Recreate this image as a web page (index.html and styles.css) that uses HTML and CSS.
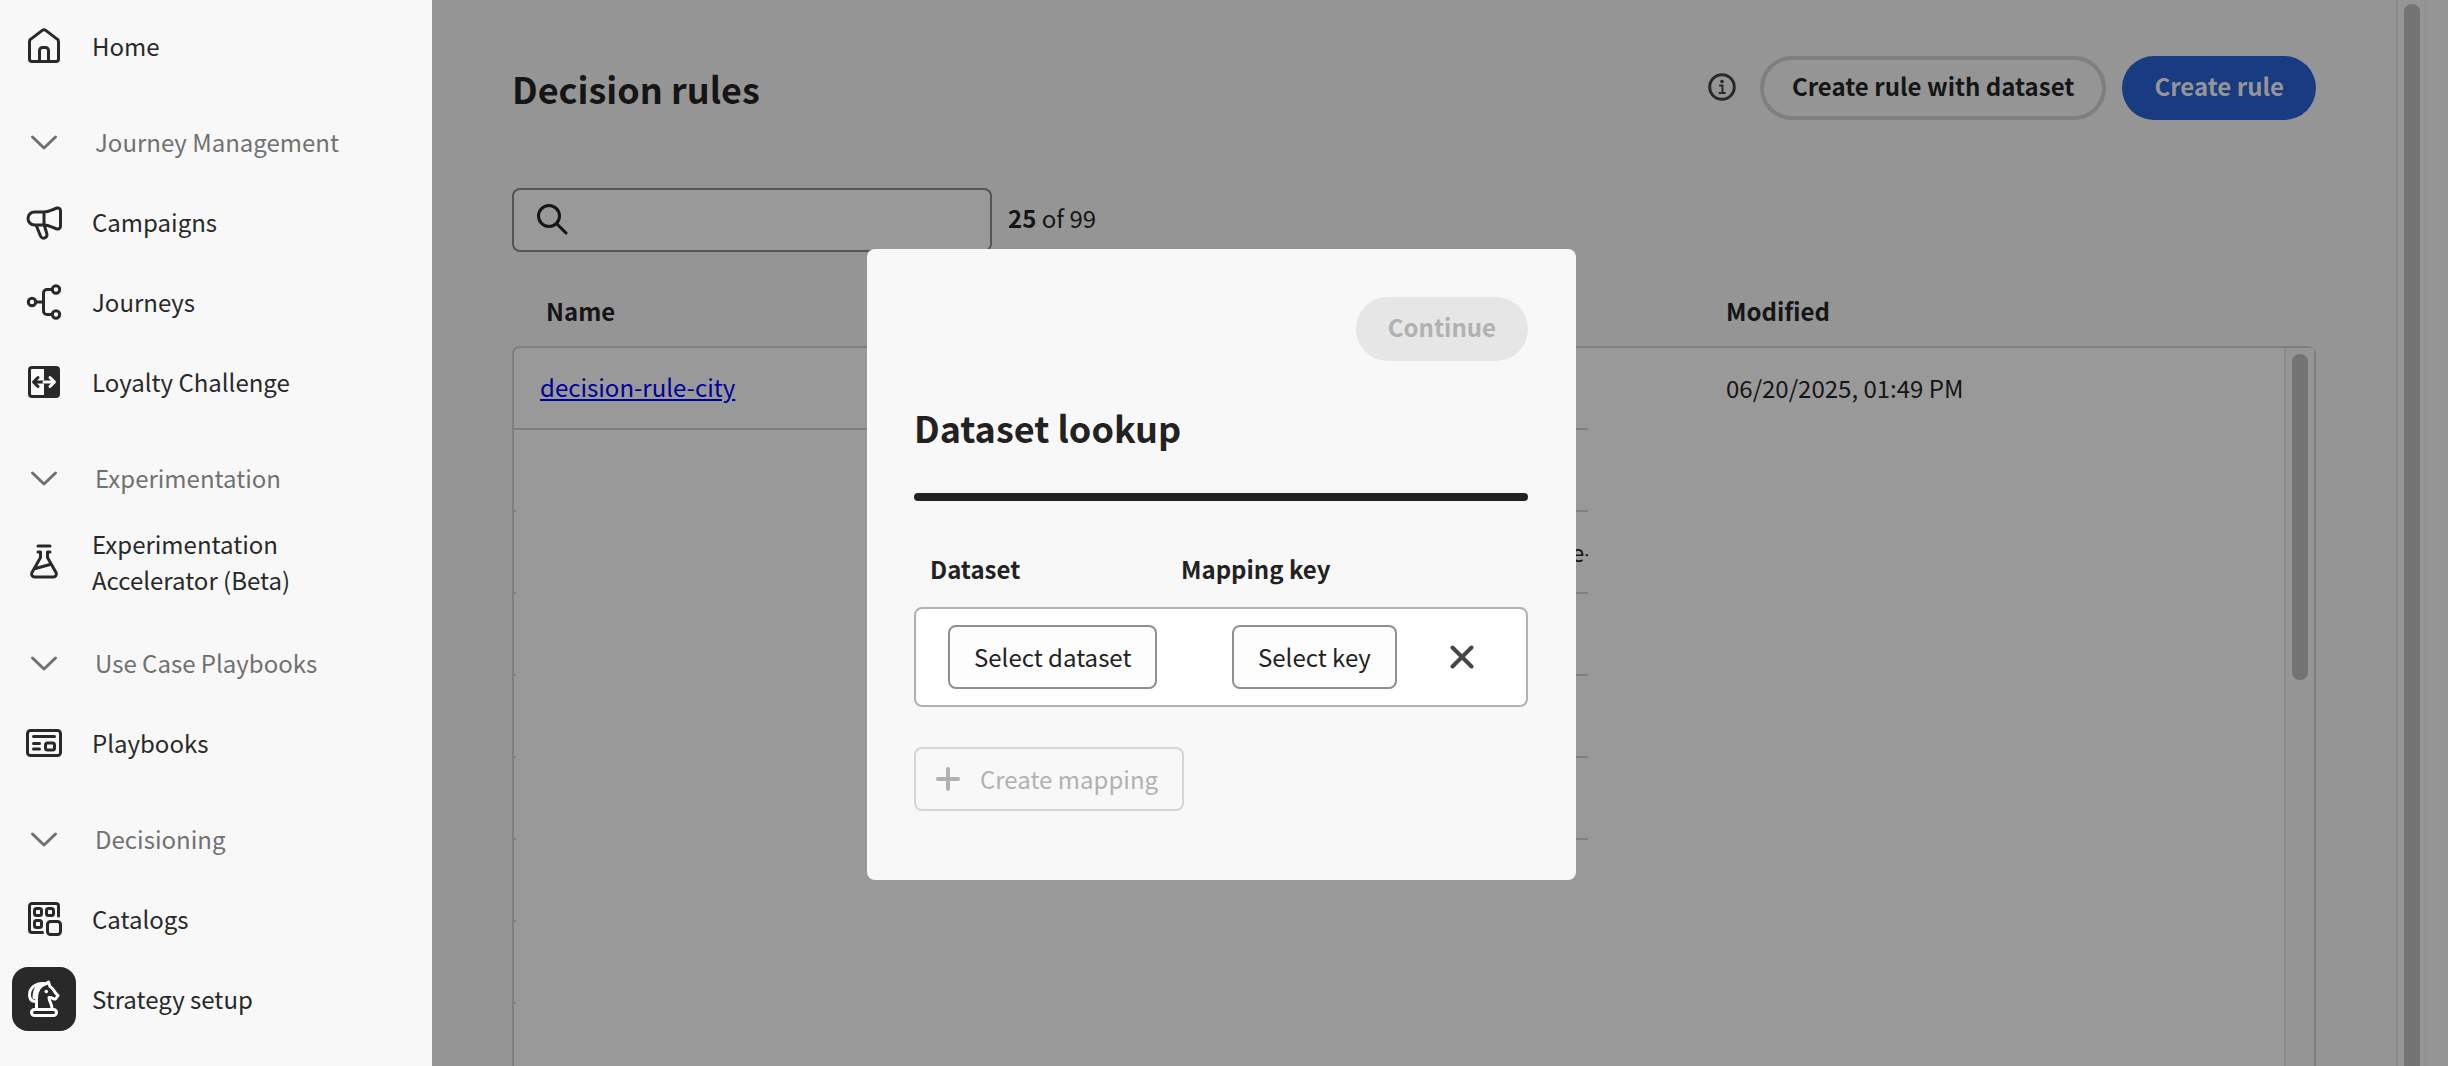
FILE: index.html
```html
<!DOCTYPE html>
<html lang="en">
<head>
<meta charset="utf-8">
<title>Decision rules</title>
<link rel="stylesheet" href="styles.css">
</head>
<body>
<div class="app">
  <nav class="sidebar" aria-label="Main">
    <a class="nav-item" href="#">
      <span class="nav-icon"><svg viewBox="0 0 40 40"><path d="M5.500 15.500a3 3 0 0 1 1.300-2.400L18.300 4.400a2.800 2.800 0 0 1 3.400 0l11.500 8.700a3 3 0 0 1 1.300 2.400V33a2.500 2.500 0 0 1-2.500 2.500H8A2.500 2.500 0 0 1 5.500 33zM15.500 35V24.500a3 3 0 0 1 3-3h3a3 3 0 0 1 3 3V35"/></svg></span>
      <span class="nav-label">Home</span>
    </a>
    <button class="nav-group" type="button"><span class="nav-icon"><svg viewBox="0 0 40 40"><path d="M8.500 15 20 26l11.500-11"/></svg></span><span class="nav-label">Journey Management</span></button>
    <a class="nav-item" href="#">
      <span class="nav-icon"><svg viewBox="0 0 40 40"><path d="M20 10h-9.500a6.500 6.500 0 0 0 0 13H20zM20 10c5 0 8-2.500 13-4a2.800 2.800 0 0 1 3.500 2.700v15.600a2.800 2.800 0 0 1-3.500 2.700C28 25.500 25 23 20 23M12.500 24l4 10a3.300 3.300 0 0 0 6.300-2.500L20.500 24"/></svg></span>
      <span class="nav-label">Campaigns</span>
    </a>
    <a class="nav-item" href="#">
      <span class="nav-icon"><svg viewBox="0 0 40 40"><circle cx="8" cy="20" r="3.700"/><circle cx="32" cy="7.500" r="3.700"/><circle cx="32" cy="32.500" r="3.700"/><path d="M12 20h7.500M28 7.500h-5a3.500 3.500 0 0 0-3.500 3.500v18a3.500 3.500 0 0 0 3.500 3.500h5"/></svg></span>
      <span class="nav-label">Journeys</span>
    </a>
    <a class="nav-item" href="#">
      <span class="nav-icon"><svg viewBox="0 0 40 40"><rect x="5.500" y="5.500" width="29" height="29" rx="2.500"/><path class="solid" d="M20 5h13a2 2 0 0 1 2 2v26a2 2 0 0 1-2 2H20z"/><path d="M20 20H10M14 15.500 9.500 20l4.500 4.500"/><path class="inverse" d="M20 20h10M26 15.500l4.500 4.500-4.500 4.500"/></svg></span>
      <span class="nav-label">Loyalty Challenge</span>
    </a>
    <button class="nav-group" type="button"><span class="nav-icon"><svg viewBox="0 0 40 40"><path d="M8.500 15 20 26l11.500-11"/></svg></span><span class="nav-label">Experimentation</span></button>
    <a class="nav-item" href="#">
      <span class="nav-icon"><svg viewBox="0 0 40 40"><path d="M14 3h12M14 9h2.500v5.500L8 29.500a3 3 0 0 0 2.600 4.500h18.800a3 3 0 0 0 2.600-4.500l-8.500-15V9H26M11.500 25.500l14.500-4"/></svg></span>
      <span class="nav-label">Experimentation<br>Accelerator (Beta)</span>
    </a>
    <button class="nav-group" type="button"><span class="nav-icon"><svg viewBox="0 0 40 40"><path d="M8.500 15 20 26l11.500-11"/></svg></span><span class="nav-label">Use Case Playbooks</span></button>
    <a class="nav-item" href="#">
      <span class="nav-icon"><svg viewBox="0 0 40 40"><rect x="3.500" y="7.500" width="33" height="25" rx="3"/><rect x="21.500" y="20" width="9" height="7" rx="2"/><path d="M9.500 13.500h21M9.500 20.500h6M9.500 26h6"/></svg></span>
      <span class="nav-label">Playbooks</span>
    </a>
    <button class="nav-group" type="button"><span class="nav-icon"><svg viewBox="0 0 40 40"><path d="M8.500 15 20 26l11.500-11"/></svg></span><span class="nav-label">Decisioning</span></button>
    <a class="nav-item" href="#">
      <span class="nav-icon"><svg viewBox="0 0 40 40"><path d="M34.500 17V7A2.500 2.500 0 0 0 32 4.500H8A2.500 2.500 0 0 0 5.500 7v24A2.500 2.500 0 0 0 8 33.500h10.500"/><rect x="10.500" y="9.500" width="7" height="7" rx="2"/><rect x="22.500" y="9.500" width="7" height="7" rx="2"/><rect x="10.500" y="21.500" width="7" height="7" rx="2"/><rect x="23.500" y="22.500" width="13" height="13" rx="3"/></svg></span>
      <span class="nav-label">Catalogs</span>
    </a>
    <a class="nav-item current" href="#" aria-current="page">
      <span class="nav-icon"><svg viewBox="0 0 40 40"><path d="M12.500 30V19c0-8 4-13 10-14.500l2-1.500 1.500 4.500c3 1.500 4 4 5.500 6.500l2.500 2.500-2.500 3.500c-2 .5-3.500-2-6.500-1.500 0 4.500 3 6 3 11M21 4.500C11 3.500 5.500 9.500 5.500 16c0 3.500 1.500 6 5.500 6.500M15 6.500c-4 3-5 7-5 12"/><circle class="dot" cx="22.300" cy="12.500" r="1.800"/><rect x="7.500" y="30.500" width="25" height="6" rx="3"/></svg></span>
      <span class="nav-label">Strategy setup</span>
    </a>
  </nav>

  <main class="content">
    <header class="page-head">
      <h1>Decision rules</h1>
      <svg class="info" viewBox="0 0 28 28" role="img" aria-label="Info"><circle cx="14" cy="14" r="12.300"/><path d="M12 12.500h2.500V20M11.500 20h5.500"/><circle class="dot" cx="14" cy="8.500" r="1.800"/></svg>
      <button class="pill outline" type="button">Create rule with dataset</button>
      <button class="pill accent" type="button">Create rule</button>
    </header>
    <div class="toolbar">
      <label class="search">
        <svg viewBox="0 0 32 32"><circle cx="13" cy="12" r="10.500"/><path d="m21 20 9 9"/></svg>
        <input type="search" aria-label="Search rules">
      </label>
      <p class="count"><b>25</b> of 99</p>
    </div>
    <div class="table-area">
      <table class="rules">
        <thead><tr><th class="name">Name</th><th class="mid"></th><th>Modified</th></tr></thead>
        <tbody>
          <tr><td><a href="#">decision-rule-city</a></td><td></td><td class="plain">06/20/2025, 01:49 PM</td></tr>
          <tr><td class="tick"></td><td></td><td class="plain"></td></tr>
          <tr><td class="tick"></td><td class="tail"><span>e-</span></td><td class="plain"></td></tr>
          <tr><td class="tick"></td><td></td><td class="plain"></td></tr>
          <tr><td class="tick"></td><td></td><td class="plain"></td></tr>
          <tr><td class="tick"></td><td></td><td class="plain"></td></tr>
          <tr><td class="tick"></td><td class="plain"></td><td class="plain"></td></tr>
          <tr><td class="tick"></td><td class="plain"></td><td class="plain"></td></tr>
        </tbody>
      </table>
      <div class="track inner"><div class="thumb"></div></div>
    </div>
  </main>
  <div class="track outer"><div class="thumb"></div></div>
</div>

<section class="dialog" role="dialog" aria-labelledby="dialog-title">
  <button class="pill muted" type="button" disabled>Continue</button>
  <h2 id="dialog-title">Dataset lookup</h2>
  <hr>
  <div class="mapping-head"><span>Dataset</span><span>Mapping key</span></div>
  <div class="mapping-row">
    <button class="box" type="button">Select dataset</button>
    <button class="box" type="button">Select key</button>
    <button class="remove" type="button" aria-label="Remove mapping"><svg viewBox="0 0 24 24"><path d="m2.500 2.500 19 19M21.500 2.500l-19 19"/></svg></button>
  </div>
  <button class="box create" type="button" disabled><svg viewBox="0 0 24 24"><path d="M12 2v20M2 12h20"/></svg>Create mapping</button>
</section>
</body>
</html>
```
FILE: styles.css
```css
* { box-sizing: border-box; }

body {
  margin: 0;
  background: #959595;
  color: #292929;
  font: 24px/36px "Noto Sans CJK SC", "Open Sans", sans-serif;
}

button, input { font: inherit; color: inherit; }
button { padding: 0; border: 0; background: none; }
svg { display: block; fill: none; stroke: currentColor; stroke-width: 3; stroke-linecap: round; stroke-linejoin: round; }
.dot { fill: currentColor; stroke: none; }

.app { display: flex; height: 100vh; overflow: hidden; }

/* Sidebar */
.sidebar {
  display: flex;
  flex: none;
  flex-direction: column;
  gap: 16px;
  width: 432px;
  padding: 14px 12px;
  background: #f8f8f8;
}
.nav-item, .nav-group {
  display: flex;
  flex: none;
  align-items: center;
  gap: 16px;
  min-height: 64px;
  text-align: left;
  text-decoration: none;
  color: #292929;
}
.nav-group { gap: 19px; margin-top: 16px; color: #717171; }
.nav-label { padding-bottom: 1px; }
.nav-icon { display: grid; place-items: center; width: 64px; height: 64px; border-radius: 16px; }
.nav-icon svg { width: 40px; height: 40px; }
.current .nav-icon { background: #292929; color: #fff; }
.solid { fill: currentColor; stroke: none; }
.inverse { stroke: #f8f8f8; }

/* Page behind the dialog */
.content {
  display: flex;
  flex: 1;
  flex-direction: column;
  min-width: 0;
  padding: 56px 80px 0;
  color: #151515;
}
.page-head { display: flex; align-items: center; gap: 16px; }
h1, h2 { margin: 0; font-size: 36px; line-height: 64px; font-weight: 700; }
h1 { flex: 1; }
.info { width: 28px; height: 28px; margin: 0 8px 2px 0; stroke-width: 3; color: #292929; }
.info path { stroke-width: 2; }
.pill { height: 64px; padding: 0 32px 4px; border-radius: 32px; font-weight: 700; white-space: nowrap; }
.outline { border: 4px solid #7f7f7f; padding: 0 28px 4px; }
.accent { background: #193b82; color: #959595; }
.toolbar { display: flex; align-items: center; gap: 16px; margin-top: 68px; }
.search {
  display: flex;
  align-items: center;
  gap: 16px;
  width: 480px;
  height: 64px;
  padding: 0 22px;
  border: 2px solid #555;
  border-radius: 8px;
  background: #999;
}
.search svg { width: 32px; height: 32px; }
.search input { flex: 1; min-width: 0; border: 0; outline: 0; background: none; }
.count { margin: 0; padding-bottom: 4px; }

.table-area { position: relative; flex: 1; min-height: 0; margin-top: 22px; overflow: hidden; }
.table-area::before {
  position: absolute;
  inset: 72px 0 -8px;
  border: 2px solid #7f7f7f;
  border-radius: 8px;
  background: #999;
  content: "";
}
.rules { position: relative; width: calc(100% - 34px); border-spacing: 0; table-layout: fixed; }
.rules th { height: 74px; padding: 0; text-align: left; font-weight: 700; }
.rules .name { width: 536px; padding-left: 34px; }
.rules .mid { width: 540px; }
.rules th:last-child { padding-left: 138px; }
.rules td { height: 82px; padding: 0 0 2px 28px; border-bottom: 2px solid #7f7f7f; }
.rules td:last-child { padding-left: 138px; }
.rules .plain, .rules .tick { border-bottom: 0; }
.rules .tick { background: linear-gradient(#7f7f7f, #7f7f7f) 2px 100% / 2px 2px no-repeat; }
.rules .tail { padding: 0 0 4px; text-align: right; }
.tail span { display: inline-block; width: 17px; overflow: hidden; text-align: left; vertical-align: middle; }
.rules a { color: #00009a; }

.track { border: solid #8b8b8b; border-width: 0 2px; background: #959595; }
.thumb { width: 16px; border-radius: 8px; background: #737373; }
.inner { position: absolute; inset: 74px 2px 0 auto; width: 30px; border-right: 0; padding: 6px; }
.inner .thumb { height: 326px; }
.outer { flex: none; width: 30px; margin-right: 22px; padding: 4px 6px 0; border-right-color: #909090; }
.outer .thumb { height: 100%; border-radius: 8px 8px 0 0; }

/* Dialog */
.dialog {
  position: absolute;
  top: 249px;
  left: calc(50% - 357px);
  display: flex;
  flex-direction: column;
  align-items: flex-start;
  width: 709px;
  padding: 48px 48px 69px 47px;
  border-radius: 8px;
  background: #f8f8f8;
  color: #222;
}
.muted { align-self: flex-end; background: #e6e6e6; color: #b1b1b1; }
.dialog h2 { margin-top: 34px; }
hr { width: 100%; height: 8px; margin: 34px 0 0; border: 0; border-radius: 4px; background: #222; }
.mapping-head, .mapping-row { display: grid; align-items: center; width: 100%; }
.mapping-head { grid-template-columns: 251px 1fr; margin-top: 50px; padding-left: 16px; font-weight: 700; }
.mapping-row {
  grid-template-columns: 284px 218px 1fr;
  justify-items: start;
  height: 100px;
  margin-top: 20px;
  padding-left: 32px;
  border: 2px solid #b1b1b1;
  border-radius: 8px;
  background: #fff;
}
.box { height: 64px; padding: 0 24px 1px; border: 2px solid #909090; border-radius: 8px; background: #fdfdfd; white-space: nowrap; }
.remove svg, .create svg { width: 24px; height: 24px; stroke-width: 4; }
.remove { color: #464646; }
.create { display: flex; align-items: center; gap: 20px; margin-top: 40px; padding: 0 24px 1px 20px; border-color: #d5d5d5; background: #f8f8f8; color: #b1b1b1; }
```
